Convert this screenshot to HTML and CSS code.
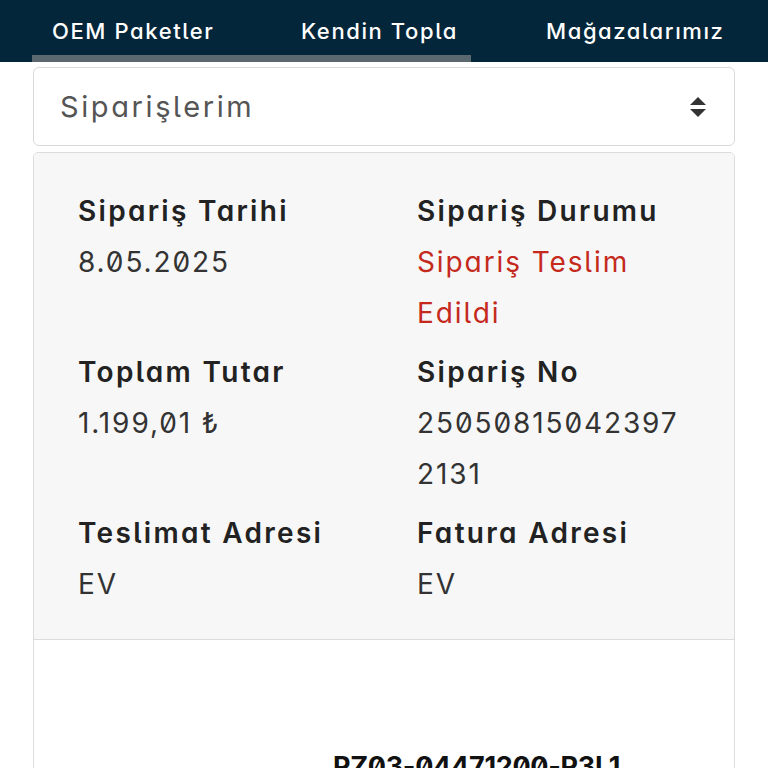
FILE: index.html
```html
<!DOCTYPE html>
<html lang="tr">
<head>
<meta charset="utf-8">
<link rel="stylesheet" href="styles.css">
</head>
<body>
<header class="topbar">
  <nav class="tabs">
    <span class="tab tab-1">OEM Paketler</span>
    <span class="tab tab-2">Kendin Topla</span>
    <span class="tab tab-3">Mağazalarımız</span>
  </nav>
  <div class="indicator"></div>
</header>
<main class="content">
  <div class="select">
    <span class="select-text">Siparişlerim</span>
    <svg class="select-arrows" width="18" height="22" viewBox="0 0 18 22">
      <path d="M9 1 L17 9 L1 9 Z" fill="#333"/>
      <path d="M1 13 L17 13 L9 21 Z" fill="#333"/>
    </svg>
  </div>
  <section class="card">
    <div class="card-info">
      <div class="field">
        <div class="label">Sipariş Tarihi</div>
        <div class="value">8.05.2025</div>
      </div>
      <div class="field">
        <div class="label">Sipariş Durumu</div>
        <div class="value status">Sipariş Teslim Edildi</div>
      </div>
      <div class="field">
        <div class="label">Toplam Tutar</div>
        <div class="value">1.199,01 ₺</div>
      </div>
      <div class="field">
        <div class="label">Sipariş No</div>
        <div class="value">25050815042397<br>2131</div>
      </div>
      <div class="field">
        <div class="label">Teslimat Adresi</div>
        <div class="value">EV</div>
      </div>
      <div class="field">
        <div class="label">Fatura Adresi</div>
        <div class="value">EV</div>
      </div>
    </div>
    <div class="card-items">
      <div class="item-code">PZ03-04471200-P3L1</div>
    </div>
  </section>
</main>
</body>
</html>
```

FILE: styles.css
```css
html, body {
  margin: 0;
  padding: 0;
  background: #fff;
  font-family: Inter, "Noto Sans", sans-serif;
  font-feature-settings: "cv11" 1, "ss02" 1;
  overflow: hidden;
}

.topbar {
  background: #04263a;
  height: 62px;
  position: relative;
}

.tabs {
  display: flex;
  align-items: center;
  height: 62px;
  padding-left: 52px;
  box-sizing: border-box;
}

.tab {
  color: #fff;
  font-size: 22px;
  font-weight: 500;
  letter-spacing: 1.6px;
  white-space: nowrap;
  line-height: 1;
}

.tab-1 { width: 249px; }
.tab-2 { width: 245px; }

.indicator {
  position: absolute;
  left: 32px;
  width: 439px;
  bottom: 0;
  height: 7px;
  background: #5b6870;
}

.content {
  padding: 5px 33px 0 33px;
}

.select {
  height: 79px;
  box-sizing: border-box;
  border: 1px solid #d9d9d9;
  border-radius: 6px;
  display: flex;
  align-items: center;
  justify-content: space-between;
  padding: 0 27px 0 26px;
}

.select-text {
  font-size: 29px;
  color: #555;
  letter-spacing: 2.6px;
}

.card {
  margin-top: 6px;
  border: 1px solid #dcdcdc;
  border-radius: 5px;
  overflow: hidden;
}

.card-info {
  background: #f7f7f7;
  display: grid;
  grid-template-columns: 339px 1fr;
  row-gap: 8px;
  padding: 33px 20px 29px 44px;
  border-bottom: 1px solid #dcdcdc;
}

.label {
  font-size: 28px;
  font-weight: 600;
  color: #222;
  line-height: 51px;
  letter-spacing: 2.3px;
}

.value {
  font-size: 28px;
  color: #333;
  line-height: 51px;
  letter-spacing: 1.9px;
}

.status {
  color: #c4291c;
  padding-right: 40px;
}

.card-items {
  background: #fff;
  height: 300px;
  padding: 110px 0 0 299px;
}

.item-code {
  font-size: 27px;
  font-weight: 700;
  color: #111;
  letter-spacing: -0.3px;
}
```
